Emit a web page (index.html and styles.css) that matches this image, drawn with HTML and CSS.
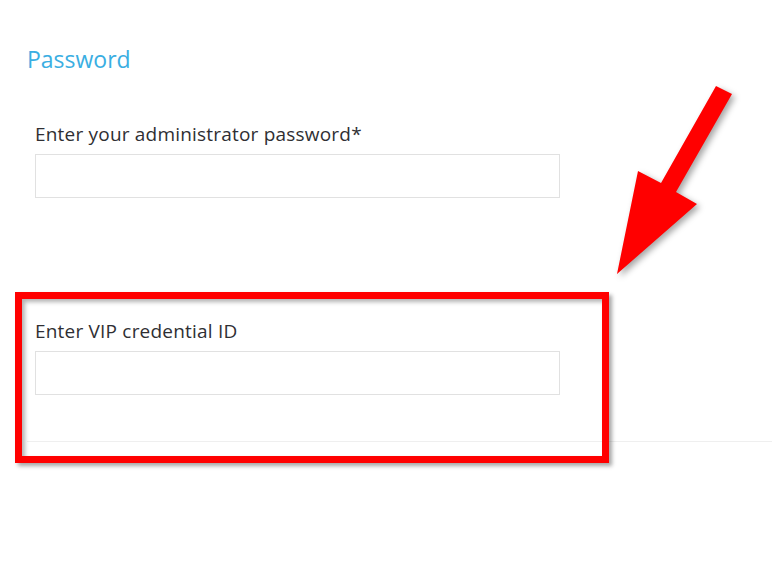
FILE: index.html
```html
<!DOCTYPE html>
<html lang="en">
<head>
<meta charset="utf-8">
<title>Password</title>
<link rel="stylesheet" href="styles.css">
</head>
<body>
<main class="panel">
  <h2 class="title">Password</h2>
  <div class="field first">
    <label class="label" for="pw">Enter your administrator password*</label>
    <input class="input" id="pw" type="password">
  </div>
  <div class="field second">
    <label class="label" for="vip">Enter VIP credential ID</label>
    <input class="input" id="vip" type="text">
  </div>
  <div class="divider"></div>
</main>
<div class="callout"></div>
<svg class="arrow" width="772" height="573" viewBox="0 0 772 573">
  <polygon points="716,86 732,94 676,192 697,204 617,274 638,171 661,183" fill="#ff0000"/>
</svg>
</body>
</html>
```
FILE: styles.css
```css
html, body {
  margin: 0;
  padding: 0;
  background: #ffffff;
}
body {
  font-family: "Open Sans", "Liberation Sans", sans-serif;
  color: #333333;
  width: 772px;
  height: 573px;
  overflow: hidden;
  position: relative;
}
.panel {
  padding-top: 44px;
  display: flex;
  flex-direction: column;
}
.title {
  margin: 0 0 0 27px;
  font-size: 23px;
  line-height: 30px;
  font-weight: 400;
  color: #3aaee2;
}
.field {
  margin-left: 35px;
  width: 525px;
  display: flex;
  flex-direction: column;
}
.field.first {
  margin-top: 48px;
}
.field.second {
  margin-top: 121px;
}
.label {
  font-size: 19px;
  line-height: 24px;
  letter-spacing: 0.2px;
  margin-bottom: 8px;
  color: #2f2f33;
}
.input {
  box-sizing: border-box;
  height: 44px;
  width: 525px;
  border: 1px solid #e1e1e1;
  background: #ffffff;
  margin: 0;
  padding: 0 10px;
  outline: none;
}
.divider {
  margin-top: 46px;
  margin-left: 27px;
  border-top: 1px solid #efefef;
}
.callout {
  position: absolute;
  left: 15px;
  top: 292px;
  width: 594px;
  height: 171px;
  box-sizing: border-box;
  border: 7px solid #ff0000;
  box-shadow: 3px 3px 4px rgba(0, 0, 0, 0.35), inset 3px 3px 4px rgba(0, 0, 0, 0.3);
}
.arrow {
  position: absolute;
  left: 0;
  top: 0;
  filter: drop-shadow(3px 3px 3px rgba(0, 0, 0, 0.35));
}
```
